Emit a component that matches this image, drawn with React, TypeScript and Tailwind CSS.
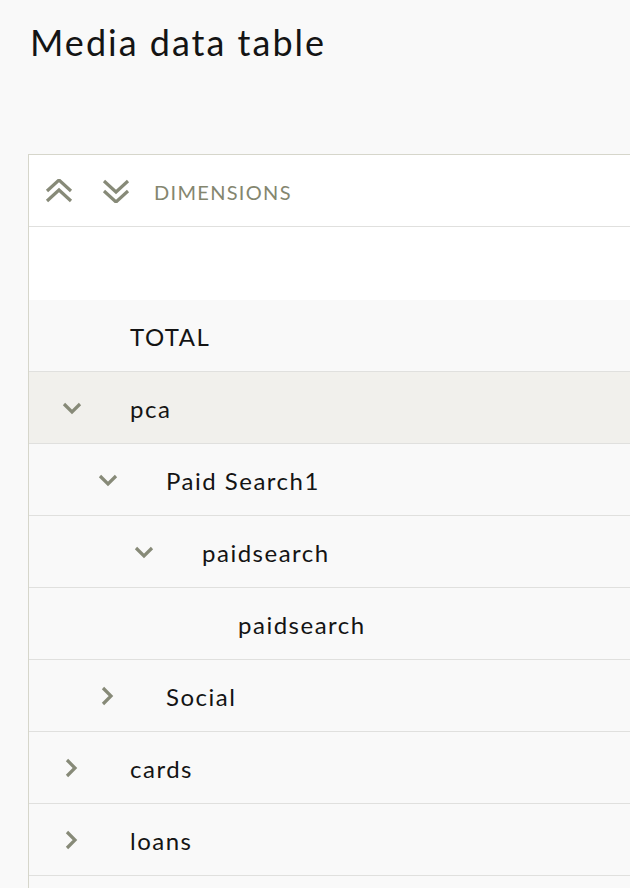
import React from "react";

type Row = {
  label: string;
  level: number;
  toggle?: "open" | "closed";
  active?: boolean;
};

const rows: Row[] = [
  { label: "TOTAL", level: 0 },
  { label: "pca", level: 0, toggle: "open", active: true },
  { label: "Paid Search1", level: 1, toggle: "open" },
  { label: "paidsearch", level: 2, toggle: "open" },
  { label: "paidsearch", level: 3 },
  { label: "Social", level: 1, toggle: "closed" },
  { label: "cards", level: 0, toggle: "closed" },
  { label: "loans", level: 0, toggle: "closed" },
  { label: "", level: 0 },
];

function ChevronDown() {
  return (
    <svg width="20" height="14" viewBox="0 0 20 14" fill="none">
      <path d="M2 3l8 8 8-8" stroke="#878a78" strokeWidth="3.2" />
    </svg>
  );
}

function ChevronRight() {
  return (
    <svg width="20" height="20" viewBox="0 0 20 20" fill="none">
      <path d="M5 2l8 8-8 8" stroke="#878a78" strokeWidth="3.2" />
    </svg>
  );
}

function DoubleUp() {
  return (
    <svg width="28" height="24" viewBox="0 0 28 24" fill="none">
      <path d="M2 12L14 1l12 11" stroke="#878a78" strokeWidth="3.2" />
      <path d="M2 22L14 11l12 11" stroke="#878a78" strokeWidth="3.2" />
    </svg>
  );
}

function DoubleDown() {
  return (
    <svg width="28" height="24" viewBox="0 0 28 24" fill="none">
      <path d="M2 2l12 11L26 2" stroke="#878a78" strokeWidth="3.2" />
      <path d="M2 12l12 11 12-11" stroke="#878a78" strokeWidth="3.2" />
    </svg>
  );
}

export default function App() {
  return (
    <div
      className="min-h-screen bg-[#f9f9f9] text-[#141414]"
      style={{ fontFamily: "Lato, 'Noto Sans', sans-serif" }}
    >
      <h1 className="pl-[30px] pt-[20px] text-[36px] leading-[44px] tracking-[2px]">
        Media data table
      </h1>

      <div className="ml-[28px] mt-[90px] border-l border-t border-[#d6d6cb] bg-white">
        <div className="flex h-[72px] items-center border-b border-[#e0e0de] pl-[15px]">
          <button className="flex h-[30px] w-[30px] items-center justify-center">
            <DoubleUp />
          </button>
          <button className="ml-[27px] flex h-[30px] w-[30px] items-center justify-center">
            <DoubleDown />
          </button>
          <span className="ml-[23px] pt-[2px] text-[20px] uppercase tracking-[1.3px] text-[#84866f]">
            Dimensions
          </span>
        </div>

        <div className="h-[73px]" />

        {rows.map((row, i) => (
          <div
            key={i}
            className={
              "flex h-[72px] items-center border-b border-[#e0e0de] pl-[33px] " +
              (row.active ? "bg-[#f1f0ec]" : "bg-[#f9f9f9]")
            }
          >
            <div style={{ width: row.level * 36 }} className="shrink-0" />
            <div className="flex w-[20px] shrink-0 items-center justify-center">
              {row.toggle === "open" && <ChevronDown />}
              {row.toggle === "closed" && <ChevronRight />}
            </div>
            <span className="ml-[48px] pt-[3px] text-[24px] tracking-[1.5px]">{row.label}</span>
          </div>
        ))}
      </div>
    </div>
  );
}
